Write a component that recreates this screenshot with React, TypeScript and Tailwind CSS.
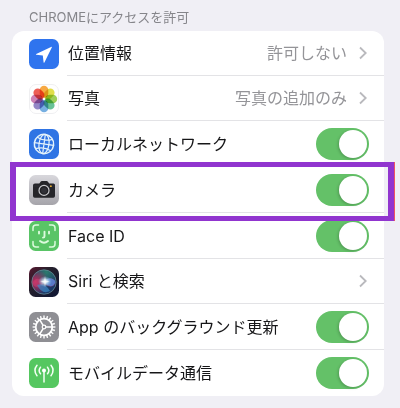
import { useState } from "react";
import type { ReactNode } from "react";

type Row = {
  id: string;
  label: string;
  icon: ReactNode;
  kind: "toggle" | "link";
  value?: string;
  highlighted?: boolean;
};

const FONT = "font-[Inter,'Noto_Sans_CJK_JP',sans-serif]";

function LocationIcon() {
  return (
    <svg viewBox="0 0 30 30" className="size-[30px]" aria-hidden="true">
      <rect width="30" height="30" rx="6.5" fill="#2f74ee" />
      <path d="M22.6 7.8 7.2 15.1q-.9.5.2.7l6.4.8.8 6.7q.2 1 .8.1L22.9 8.2q.1-.6-.3-.4Z" fill="#fff" />
    </svg>
  );
}

const PETALS = ["#f7a233", "#dfdc3a", "#96ca4c", "#5bbd8e", "#6aa8df", "#8b7dc2", "#c978b0", "#ec5046"];

function PhotosIcon() {
  return (
    <svg viewBox="0 0 30 30" className="size-[30px]" aria-hidden="true">
      <rect x=".5" y=".5" width="29" height="29" rx="6.5" fill="#fefefe" stroke="#efeff1" />
      <g className="isolate">
        {PETALS.map((color, i) => (
          <rect
            key={color}
            x="10.700"
            y="1.800"
            width="8.600"
            height="12"
            rx="4.300"
            fill={color}
            opacity=".92"
            transform={`rotate(${i * 45} 15 15)`}
            className="mix-blend-multiply"
          />
        ))}
      </g>
    </svg>
  );
}

function NetworkIcon() {
  return (
    <svg viewBox="0 0 30 30" className="size-[30px]" aria-hidden="true">
      <rect width="30" height="30" rx="6.5" fill="#2f74e4" />
      <g fill="none" stroke="#e4f3fb" strokeWidth="1.2" transform="rotate(8 15 15)">
        <circle cx="15" cy="15" r="9.7" strokeWidth="1.5" />
        <ellipse cx="15" cy="15" rx="5" ry="9.7" />
        <path d="M15 5.3v19.4M5.3 15h19.4M7.300 9.200q7.700 3.600 15.400 0M7.300 20.800q7.700-3.600 15.400 0" />
      </g>
    </svg>
  );
}

function CameraIcon() {
  return (
    <svg viewBox="0 0 30 30" className="size-[30px]" aria-hidden="true">
      <defs>
        <linearGradient id="camera-bg" x1="0" y1="0" x2="0" y2="1">
          <stop offset="0" stopColor="#d8d7dc" />
          <stop offset="1" stopColor="#a5a4aa" />
        </linearGradient>
      </defs>
      <rect width="30" height="30" rx="6.5" fill="url(#camera-bg)" />
      <path
        d="M6 8.500h4.300l1.500-1.900q.4-.5 1-.5h4.900q.6 0 1 .5l1.500 1.900h4.200Q26 8.500 26 10.100V21q0 1.700-1.700 1.700H5.700Q4 22.700 4 21V10.200Q4 8.500 6 8.500Z"
        fill="#252529"
      />
      <path d="M4 11h22" stroke="#3b3b40" strokeWidth=".5" />
      <circle cx="15" cy="15.400" r="5" fill="#202024" stroke="#c9c9cd" strokeWidth="1.200" />
      <circle cx="15" cy="15.400" r="3" fill="#303036" />
      <circle cx="21.900" cy="11.200" r=".9" fill="#f5b731" />
    </svg>
  );
}

function FaceIdIcon() {
  return (
    <svg viewBox="0 0 30 30" className="size-[30px]" aria-hidden="true">
      <rect width="30" height="30" rx="6.5" fill="#59c466" />
      <g fill="none" stroke="#dcfadd" strokeWidth="1.500" strokeLinecap="round" strokeLinejoin="round">
        <path d="M4 9.500V7q0-3 3-3h2.500M20.500 4H23q3 0 3 3v2.500M26 20.500V23q0 3-3 3h-2.500M9.500 26H7q-3 0-3-3v-2.500" />
        <path d="M10 10.600v2M20 10.600v2M15.500 10.600v4.700q0 1.300-1.500 1.300M11 20q4 3.300 8 0" strokeWidth="1.900" />
      </g>
    </svg>
  );
}

function SiriIcon() {
  return (
    <svg viewBox="0 0 30 30" className="size-[30px]" aria-hidden="true">
      <defs>
        <linearGradient id="siri-bg" x1="0" y1="0" x2="1" y2="1">
          <stop offset="0" stopColor="#5a1730" />
          <stop offset=".35" stopColor="#26202c" />
          <stop offset="1" stopColor="#0d1634" />
        </linearGradient>
        <radialGradient id="siri-red" cx=".15" cy=".5" r=".55">
          <stop offset="0" stopColor="#c92a58" />
          <stop offset="1" stopColor="#c92a58" stopOpacity="0" />
        </radialGradient>
        <radialGradient id="siri-green" cx=".6" cy=".1" r=".6">
          <stop offset="0" stopColor="#2c7a6d" />
          <stop offset="1" stopColor="#2c7a6d" stopOpacity="0" />
        </radialGradient>
        <radialGradient id="siri-glow">
          <stop offset="0" stopColor="#fff" />
          <stop offset=".35" stopColor="#d5eef5" stopOpacity=".85" />
          <stop offset="1" stopColor="#75bdea" stopOpacity="0" />
        </radialGradient>
      </defs>
      <rect width="30" height="30" rx="6.5" fill="url(#siri-bg)" />
      <circle cx="15" cy="15" r="12.200" fill="#1d3a68" />
      <circle cx="15" cy="15" r="12.200" fill="url(#siri-green)" />
      <circle cx="15" cy="15" r="12.200" fill="url(#siri-red)" />
      <path d="M3.500 16c3-7 8-4 11.500-1 4-5 9-5 11.500 0-1 6-7 6-11.500 1-5 6-10 5-11.500 0Z" fill="#c64276" opacity=".55" />
      <path d="M15 15c3-5 9-5 11.500 0-2 6-8 5-11.500 0Z" fill="#4e8ce4" opacity=".75" />
      <path d="M8 18q8-3 13 6-8 4-13-6Z" fill="#3c91d0" opacity=".65" />
      <circle cx="15" cy="15" r="12.200" fill="none" stroke="#6d9299" strokeWidth=".7" />
      <ellipse cx="16" cy="14.500" rx="7" ry="5.500" fill="url(#siri-glow)" />
      <path d="m16 9 .8 5 4.200.6-4.200 1-.8 4.400-.8-4.400-4.200-1 4.200-.6Z" fill="#fff" opacity=".7" />
    </svg>
  );
}

function GearIcon() {
  return (
    <svg viewBox="0 0 30 30" className="size-[30px]" aria-hidden="true">
      <rect width="30" height="30" rx="6.5" fill="#8f8f94" />
      <g fill="none" stroke="#fff">
        {Array.from({ length: 20 }).map((_, i) => (
          <path key={i} d="M15 6.500V3.600" strokeWidth="1.400" transform={`rotate(${i * 18} 15 15)`} />
        ))}
        <circle cx="15" cy="15" r="8.300" strokeWidth="1.800" />
        <circle cx="15" cy="15" r="1.800" strokeWidth="1.200" />
        <path d="M16.800 15h6.500M14.100 13.400l-3.300-5.600M14.100 16.600l-3.300 5.600" strokeWidth="1.500" />
      </g>
    </svg>
  );
}

function CellularIcon() {
  return (
    <svg viewBox="0 0 30 30" className="size-[30px]" aria-hidden="true">
      <rect width="30" height="30" rx="6.5" fill="#55c760" />
      <g fill="none" stroke="#f3fff3" strokeWidth="1.500" strokeLinecap="round">
        <path d="M15 13v11" />
        <path d="M11.500 9.200q-2.700 3.300 0 6.600M18.500 9.200q2.700 3.300 0 6.600M8 7.300q-4.200 5.200 0 10.400M22 7.300q4.200 5.200 0 10.400" />
      </g>
      <circle cx="15" cy="12.500" r="2" fill="#fff" />
    </svg>
  );
}

function Chevron() {
  return (
    <svg viewBox="0 0 8 14" className="h-3.5 w-2 shrink-0" aria-hidden="true">
      <path d="m1 1.500 5.700 5.500L1 12.500" fill="none" stroke="#b9b9bd" strokeWidth="1.800" />
    </svg>
  );
}

const ROWS: Row[] = [
  { id: "location", label: "位置情報", icon: <LocationIcon />, kind: "link", value: "許可しない" },
  { id: "photos", label: "写真", icon: <PhotosIcon />, kind: "link", value: "写真の追加のみ" },
  { id: "network", label: "ローカルネットワーク", icon: <NetworkIcon />, kind: "toggle" },
  { id: "camera", label: "カメラ", icon: <CameraIcon />, kind: "toggle", highlighted: true },
  { id: "face-id", label: "Face ID", icon: <FaceIdIcon />, kind: "toggle" },
  { id: "siri", label: "Siri と検索", icon: <SiriIcon />, kind: "link" },
  { id: "background", label: "App のバックグラウンド更新", icon: <GearIcon />, kind: "toggle" },
  { id: "cellular", label: "モバイルデータ通信", icon: <CellularIcon />, kind: "toggle" },
];

function LinkRow({ row, last }: { row: Row; last: boolean }) {
  return (
    <button type="button" className="flex h-[45px] w-full items-center gap-2 pl-[17px] text-left">
      <span className="shrink-0">{row.icon}</span>
      <span
        className={`flex h-full flex-1 items-center pr-[17px] pl-px ${last ? "" : "border-b border-[#e3e3e6]"}`}
      >
        <span className="flex-1">{row.label}</span>
        <span className="mr-3 text-[#949498]">{row.value}</span>
        <Chevron />
      </span>
    </button>
  );
}

function ToggleRow({ row, last }: { row: Row; last: boolean }) {
  const [on, setOn] = useState(true);
  return (
    <div className="relative flex h-[46px] items-center gap-2 pl-[17px]">
      <span className="shrink-0">{row.icon}</span>
      <div className={`flex h-full flex-1 items-center pr-[15px] pl-px ${last ? "" : "border-b border-[#e3e3e6]"}`}>
        <label htmlFor={row.id} className="flex-1">
          {row.label}
        </label>
        <input
          id={row.id}
          type="checkbox"
          role="switch"
          checked={on}
          onChange={(e) => setOn(e.target.checked)}
          className="flex h-8 w-[53px] shrink-0 appearance-none items-center rounded-full bg-[#e5e5ea] px-0.5 before:size-7 before:rounded-full before:bg-white before:shadow-[-1px_1px_3px_rgba(0,0,0,0.2)] checked:justify-end checked:bg-[#64c168]"
        />
      </div>
      {row.highlighted && (
        <div className="pointer-events-none absolute -top-[5px] -right-[10px] -bottom-2 -left-0.5 z-10 border-x-6 border-y-5 border-[#9135cf] shadow-[1px_0_0_#ee5560]" />
      )}
    </div>
  );
}

export default function App() {
  return (
    <main className={`${FONT} min-h-screen bg-[#f0eff5] pt-2 pr-4 pb-3 pl-3 text-base text-[#161618]`}>
      <h1 className="mb-[5px] pl-[17px] text-[13px] leading-[18px] text-[#85858a]">CHROMEにアクセスを許可</h1>
      <section className="rounded-xl bg-white">
        {ROWS.map((row, i) => {
          const last = i === ROWS.length - 1;
          return row.kind === "link" ? (
            <LinkRow key={row.id} row={row} last={last} />
          ) : (
            <ToggleRow key={row.id} row={row} last={last} />
          );
        })}
      </section>
    </main>
  );
}
